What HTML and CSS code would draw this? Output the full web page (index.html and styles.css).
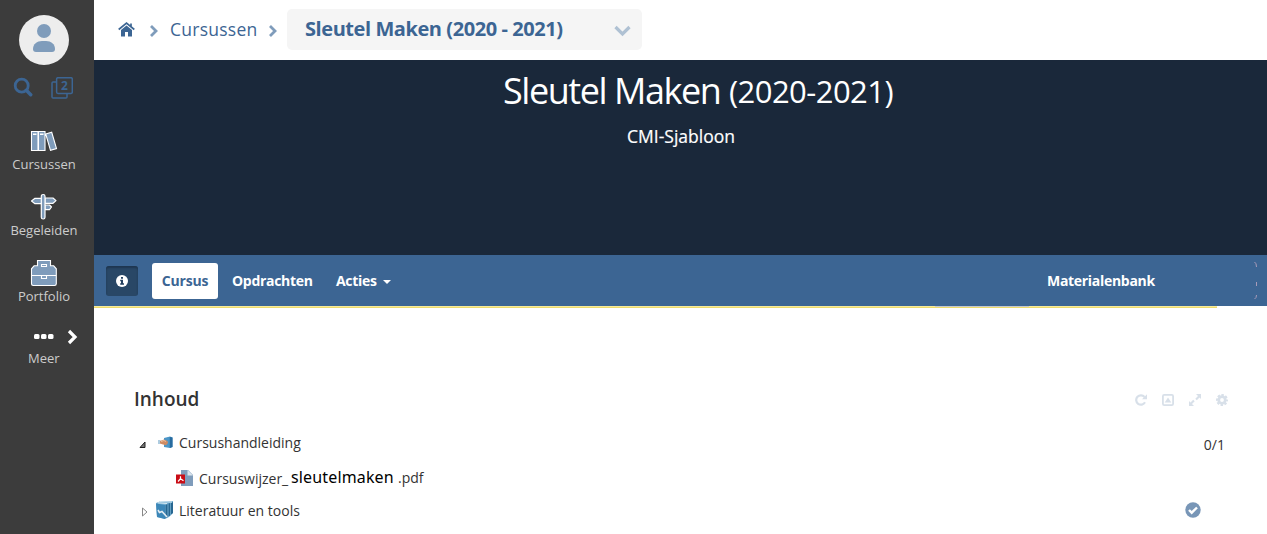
FILE: index.html
```html
<!DOCTYPE html>
<html lang="nl">
<head>
<meta charset="utf-8">
<title>Sleutel Maken (2020-2021)</title>
<link rel="stylesheet" href="styles.css">
</head>
<body>
<div class="app">
  <aside class="sidebar">
    <svg class="avatar" viewBox="0 0 50 50"><circle cx="25" cy="25" r="25" fill="#ededed"/><circle cx="25" cy="16" r="7" fill="#7f9cbb"/><path d="M14 34c0-5 4-8 9-8h4c5 0 9 3 9 8 0 2-1 3-3 3H17c-2 0-3-1-3-3z" fill="#7f9cbb"/></svg>
    <div class="tools">
      <svg width="20" height="20" viewBox="0 0 20 20" fill="none" stroke="#3c6593"><circle cx="8.7" cy="8.7" r="6.5" stroke-width="2.8"/><path d="M13.3 13.3l4.4 4.4" stroke-width="3.5" stroke-linecap="round"/></svg>
      <svg class="copies" width="22" height="22" viewBox="0 0 22 22"><path d="M5.5 5H2Q1 5 1 6v14q0 1 1 1h13q1 0 1-1v-3.500" fill="none" stroke="#3c6593" stroke-width="1.500"/><rect x="5.600" y=".7" width="15.700" height="15.700" rx="1.300" fill="none" stroke="#3c6593" stroke-width="1.500"/><text x="13.500" y="12.700" text-anchor="middle" class="count">2</text></svg>
    </div>
    <nav>
      <a class="item"><svg width="28" height="24" viewBox="0 0 28 24" fill="#7f9cbb" stroke="#fff" stroke-width="1.100"><path d="M1.500 2.500h6.500v19H1.500zM8.500 2.500H15v19H8.500zM15.700 5l6-1.700 4.800 16.300-6 1.800z"/><path d="M3 5.300h3.500M10 5.300h3.500" stroke-width="1.500"/></svg><span>Cursussen</span></a>
      <a class="item"><svg width="28" height="28" viewBox="0 0 28 28" fill="#7f9cbb" stroke="#fff" stroke-width="1.200" stroke-linejoin="round"><path d="M15 5h8l3 2.600-3 2.700h-8zM12 5.300H5L1.500 8 5 10.700h7zM15 12h4.500l2 2-2 2.600H15z"/><rect x="11.300" y="1.500" width="3.700" height="24.500" rx="1.800"/></svg><span>Begeleiden</span></a>
      <a class="item"><svg width="28" height="28" viewBox="0 0 28 28" fill="#7f9cbb" stroke="#fff" stroke-width="1.100"><path d="M7.500 6.800V1.500h13v5.300h3.200l2.600 3v15q0 1.700-1.700 1.700H3.200q-1.700 0-1.700-1.700v-15l2.600-3zM1.500 16.500h25"/><path d="M11.500 5.500h5v2h-5zM11.500 16.500h5v3h-5z"/></svg><span>Portfolio</span></a>
      <a class="more"><svg width="50" height="18" viewBox="0 0 50 18"><g fill="#fff"><rect x="1" y="6" width="5.500" height="5" rx="1.500"/><rect x="8" y="6" width="5.500" height="5" rx="1.500"/><rect x="15" y="6" width="5.500" height="5" rx="1.500"/></g><path d="M36 3l6 6-6 6" fill="none" stroke="#fff" stroke-width="3.200"/></svg><span>Meer</span></a>
    </nav>
  </aside>
  <main class="main">
    <header class="breadcrumb">
      <svg class="home" width="17" height="15" viewBox="0 0 17 15" fill="#3c6593"><path d="M8.500 3.500L14 8v6.500h-4V10H7v4.500H3V8z"/><path d="M.7 7.500l7.800-6.400 7.800 6.400M13 1.500v3" fill="none" stroke="#3c6593" stroke-width="1.700"/></svg>
      <svg class="sep first" width="10" height="14" viewBox="0 0 10 14"><path d="M2 2l5 5-5 5" fill="none" stroke="#7f9cbb" stroke-width="2.800"/></svg>
      <a class="crumb">Cursussen</a>
      <svg class="sep" width="10" height="14" viewBox="0 0 10 14"><path d="M2 2l5 5-5 5" fill="none" stroke="#7f9cbb" stroke-width="2.800"/></svg>
      <div class="picker"><span>Sleutel Maken (2020 - 2021)</span><svg width="17" height="12" viewBox="0 0 17 12"><path d="M1.500 2l7 7 7-7" fill="none" stroke="#afc1d3" stroke-width="3.200"/></svg></div>
    </header>
    <section class="hero">
      <h1><span class="name">Sleutel Maken</span><span class="year">(2020-2021)</span></h1>
      <p>CMI-Sjabloon</p>
    </section>
    <nav class="tabs">
      <a class="info"><svg width="12" height="12" viewBox="0 0 12 12"><circle cx="6" cy="6" r="6" fill="#fff"/><path d="M5 2h2v1.700H5zM4.200 4.800H7v3.500h1v1.500H4.200V8.300H5v-2h-.8z" fill="#25405f"/></svg></a>
      <a class="active">Cursus</a>
      <a class="tasks">Opdrachten</a>
      <a class="actions">Acties<i class="caret"></i></a>
      <a class="bank">Materialenbank</a>
      <svg class="edge" width="4" height="38" viewBox="0 0 4 38" fill="none" stroke="#a99bb8" stroke-width="1"><path d="M.5 0q2 1 2 5M2.500 20v4M2.500 33q0 3-2 4"/></svg>
    </nav>
    <div class="rule"><i></i></div>
    <section class="content">
      <div class="heading">
        <h2>Inhoud</h2>
        <div class="actions-bar">
          <svg viewBox="0 0 12 12" fill="none" stroke="#d8e0e9" stroke-width="2.200"><path d="M10 8.300A4.700 4.700 0 1 1 9.500 3"/><path d="M12 .3V5.200H7z" fill="#d8e0e9" stroke="none"/></svg>
          <svg viewBox="0 0 12 12"><rect x=".9" y=".9" width="10.200" height="10.200" rx="1.300" fill="none" stroke="#d8e0e9" stroke-width="1.800"/><path d="M2.700 8.500h6.600L6 3.500z" fill="#d8e0e9"/></svg>
          <svg viewBox="0 0 12 12" fill="#d8e0e9"><path d="M7 0h5v5l-1.500-1.500-2.700 2.700-1.500-1.500L9 2zM5 12H0V7l1.500 1.500 2.700-2.700 1.500 1.500L3 10z"/></svg>
          <svg viewBox="0 0 12 12"><circle cx="6" cy="6" r="3.300" fill="none" stroke="#d8e0e9" stroke-width="2.800"/><circle cx="6" cy="6" r="5" fill="none" stroke="#d8e0e9" stroke-width="2" stroke-dasharray="2.400 1.527" stroke-dashoffset="1.200"/></svg>
        </div>
      </div>
      <div class="row guide">
        <svg class="toggle" width="8" height="8" viewBox="0 0 8 8"><path d="M1 6.500L6 1v5.500z" fill="#777" stroke="#222"/></svg>
        <svg class="hand" width="15" height="13" viewBox="0 0 15 13"><path d="M6 2l6-1.500 2.500 1V11L12 12l-6-1z" fill="#4b96c8"/><path d="M11.800 1l2.700.5V11l-2.700 1z" fill="#286b9f"/><path d="M0 4h2.500v4H0z" fill="#aecce0"/><path d="M2 5l4-1.500 3.500 1.500.5 2-2 2.200-3-.7-3-1z" fill="#cf8b62"/><path d="M3 5.500l3-1 2 1" stroke="#edc09b" fill="none"/></svg>
        <span>Cursushandleiding</span><span class="score">0/1</span>
      </div>
      <div class="row pdf">
        <svg width="17" height="16" viewBox="0 0 17 16"><path d="M5 0h7l5 5v11H5z" fill="#7f9cbb"/><path d="M11.500 0v5.500H17z" fill="#dce5ed"/><path d="M0 4.500h9v9H0z" fill="#c90d16"/><path d="M4.500 6.300v2.400L2 11.500m2.500-2.800l3 2" fill="none" stroke="#fff" stroke-width="1.200"/></svg>
        <span class="file">Cursuswijzer_</span><span class="subject">sleutelmaken</span><span class="ext">.pdf</span>
      </div>
      <div class="row books">
        <svg class="toggle" width="8" height="10" viewBox="0 0 8 10"><path d="M1.500 1L6 5l-4.500 4z" fill="#fff" stroke="#888"/></svg>
        <svg class="book" width="17" height="18" viewBox="0 0 17 18"><path d="M0 2l5-2h12v12l-4 4-4 2-8-2z" fill="#73aed2"/><path d="M0 2.500l9 1.500v14l-8-2z" fill="#3c87b8"/><path d="M9.500 4v13.500l2-1.500V3zM12.500 2.500v13l1.700-1V2zM15 2v11.500l2-1.500V1z" fill="#286791"/><path d="M2 1.800L11 2.500M4 .6L16 1" stroke="#d9ebf3"/><path d="M2 9l1.500 2.500L6 10.500l5 5.500" fill="none" stroke="#e4edf3" stroke-width="1.600"/></svg>
        <span>Literatuur en tools</span>
        <svg class="done" width="16" height="16" viewBox="0 0 16 16"><circle cx="8" cy="8" r="7.700" fill="#7896b7"/><path d="M4 8l2.700 2.700L12 5.500" fill="none" stroke="#fff" stroke-width="2.400"/></svg>
      </div>
    </section>
  </main>
</div>
</body>
</html>
```
FILE: styles.css
```css
* { box-sizing: border-box; }
body { margin: 0; background: #fff; font-family: "Open Sans", sans-serif; color: #333; }
svg { display: block; flex: none; }
.app { display: flex; width: 1267px; height: 534px; overflow: hidden; }
.sidebar { width: 94px; flex: none; background: #3c3c3c; padding-top: 15px; color: #ccc; }
.avatar { width: 50px; height: 50px; margin-left: 19px; }
.tools { display: flex; padding: 12px 0 0 13px; height: 62px; }
.copies { margin-left: 18px; }
.count { font: 700 12px "Open Sans", sans-serif; fill: #3c6593; }
.item, .more { display: flex; flex-direction: column; align-items: center; width: 88px; height: 66px; font-size: 13px; line-height: 18px; }
.item svg { height: 28px; }
.more { align-items: flex-start; padding-left: 28px; }
.more svg { margin: 3px 0 3px 5px; }
.main { flex: 1; min-width: 0; }
.breadcrumb { display: flex; align-items: center; height: 60px; padding-left: 24px; color: #3c6593; }
.home { margin-top: -1px; }
.sep { margin: 1px 0 0 10px; }
.sep.first { margin-left: 14px; }
.crumb { margin: -2px 0 0 11px; font-size: 17.5px; letter-spacing: .25px; width: 88px; white-space: nowrap; }
.picker { display: flex; align-items: center; justify-content: space-between; width: 355px; height: 41px; margin: -1px 0 0 9px; padding: 0 11px 0 18px; background: #f5f5f5; border-radius: 5px; font-weight: 700; font-size: 20px; letter-spacing: -.43px; }
.picker span { white-space: nowrap; line-height: 38px; padding-bottom: 2px; }
.picker svg { margin-top: 3px; }
.hero { height: 195px; background: #1a283a; color: #fff; text-align: center; padding-top: 4px; }
.hero h1 { display: flex; align-items: baseline; margin: 0; padding-left: 409px; height: 60px; line-height: 54px; font-weight: 400; white-space: nowrap; }
.name { font-size: 36px; width: 226px; text-align: left; letter-spacing: -1.45px; }
.year { font-size: 31px; line-height: 50px; letter-spacing: -.55px; position: relative; top: -1px; }
.hero p { margin: 0; padding-left: 1px; line-height: 24px; font-size: 17.5px; -webkit-text-stroke: .2px #fff; }
.tabs { display: flex; height: 51px; align-items: center; background: #3c6593; color: #fff; font-size: 14px; font-weight: 700; letter-spacing: -.3px; padding-left: 12px; white-space: nowrap; }
.info { display: flex; width: 32px; height: 30px; align-items: center; justify-content: center; background: #294766; border-radius: 3px; box-shadow: inset 0 2px 2px #1e3650; }
.active { width: 66px; height: 36px; line-height: 36px; margin-left: 14px; background: #fff; color: #3c6593; border-radius: 3px; text-align: center; letter-spacing: -.2px; }
.tasks { width: 104px; margin-left: 14px; }
.actions { display: flex; align-items: center; width: 711px; }
.caret { border: 4px solid transparent; border-top-color: #fff; border-bottom: 0; margin: 3px 0 0 6px; }
.bank { width: 207px; }
.rule { width: 1123px; height: 2px; background: linear-gradient(#f7ea99 1px, #eedc6c 1px); }
.rule i { display: block; width: 94px; height: 1px; margin-left: 841px; background: #c5c8cf; }
.content { padding: 75px 37px 0 40px; }
.heading { display: flex; justify-content: space-between; height: 45px; }
h2 { margin: 0; font-size: 19px; line-height: 32px; font-weight: 600; }
.actions-bar { display: flex; gap: 15px; margin-top: 11px; padding-right: 2px; }
.actions-bar svg { width: 12px; height: 12px; }
.row { display: flex; align-items: center; font-size: 14px; white-space: nowrap; }
.guide { height: 30px; padding-bottom: 1px; }
.guide .toggle { margin: 5px 0 0 5px; }
.hand { margin: 0 6px 0 11px; }
.score { margin: 4px 5px 0 auto; }
.pdf { height: 38px; padding-left: 42px; }
.pdf svg { margin-top: 1px; }
.file { width: 92px; margin: 3px 0 0 6px; }
.subject { width: 107px; font-family: "Noto Sans", sans-serif; font-size: 16px; letter-spacing: .15px; color: #000; }
.books { height: 28px; }
.books .toggle { margin: 4px 0 0 7px; }
.book { margin: -1px 6px 0 7px; }
.done { margin: 0 29px 0 auto; }
```
